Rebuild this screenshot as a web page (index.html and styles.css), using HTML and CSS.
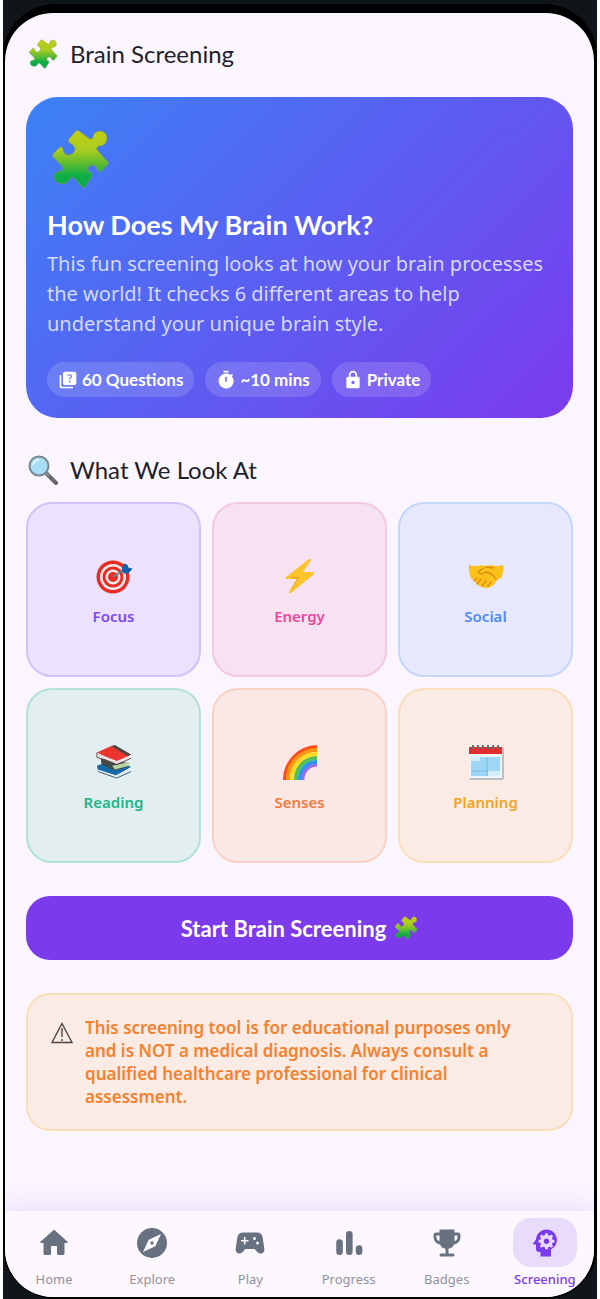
FILE: index.html
```html
<!DOCTYPE html>
<html lang="en">
<head>
<meta charset="utf-8">
<meta name="viewport" content="width=device-width, initial-scale=1">
<title>Brain Screening</title>
<link rel="stylesheet" href="styles.css">
</head>
<body>
<svg class="defs" width="0" height="0" aria-hidden="true">
  <defs>
    <linearGradient id="leaf" x1="0" y1="0" x2="0" y2="1">
      <stop offset="0" stop-color="#bfd016"/>
      <stop offset=".35" stop-color="#a9cb22"/>
      <stop offset=".55" stop-color="#67bd2e"/>
      <stop offset=".78" stop-color="#0eae45"/>
      <stop offset="1" stop-color="#0aa94a"/>
    </linearGradient>
    <symbol id="puzzle" viewBox="0 0 60 60">
      <path fill="url(#leaf)" stroke="#8c9a55" stroke-width=".6" d="M19 10 26 2Q27 1 29 2L37 8Q42 12 43 8Q44 2 50 2Q57 3 57 9Q57 16 50 17Q46 17 47 21L58 33Q59 34 58 35L51 43Q50 44 48 41Q46 36 42 36Q37 37 38 42Q43 44 42 47L35 58Q34 60 32 58L24 49Q22 47 20 50Q17 55 12 55Q5 54 4 48Q5 42 11 42Q15 41 12 37L3 28Q2 26 3 25L10 18Q12 17 13 20Q13 25 18 26Q24 26 25 20Q25 17 20 14Q17 12 19 10Z"/>
    </symbol>
  </defs>
</svg>
<div class="backdrop">
<div class="phone">
<div class="screen">
  <main class="content">
    <header class="heading">
      <svg class="heading-icon" aria-hidden="true"><use href="#puzzle"/></svg>
      <h1 class="heading-text">Brain Screening</h1>
    </header>

    <section class="hero">
      <svg class="hero-icon" aria-hidden="true"><use href="#puzzle"/></svg>
      <h2 class="hero-title">How Does My Brain Work?</h2>
      <p class="hero-text">This fun screening looks at how your brain processes the world! It checks 6 different areas to help understand your unique brain style.</p>
      <ul class="chips">
        <li class="chip"><svg class="chip-icon" viewBox="0 0 24 24" aria-hidden="true"><path d="M4 6H2v14c0 1.100.900 2 2 2h14v-2H4V6z"/><path fill-rule="evenodd" d="M20 2H8c-1.100 0-2 .900-2 2v12c0 1.100.900 2 2 2h12c1.100 0 2-.900 2-2V4c0-1.100-.900-2-2-2zm-5.990 13c-.590 0-1.050-.470-1.050-1.050 0-.590.470-1.040 1.050-1.040.590 0 1.040.450 1.040 1.040-.010.580-.450 1.050-1.040 1.050zm2.500-6.170c-.630.930-1.230 1.210-1.560 1.810-.130.240-.180.400-.180 1.180h-1.520c0-.410-.060-1.080.260-1.650.410-.730 1.180-1.160 1.630-1.800.480-.680.210-1.940-1.140-1.940-.880 0-1.320.670-1.500 1.230l-1.370-.570C11.510 5.960 12.520 5 13.990 5c1.230 0 2.080.560 2.510 1.260.370.600.580 1.730.010 2.570z"/></svg>60 Questions</li>
        <li class="chip"><svg class="chip-icon" viewBox="0 0 24 24" aria-hidden="true"><path fill-rule="evenodd" d="M9 1h6v2H9zM19 7.400l1.400-1.400-1.400-1.400-1.500 1.400A9 9 0 1 0 19 7.400zM11 8h2v6h-2z"/></svg>~10 mins</li>
        <li class="chip"><svg class="chip-icon" viewBox="0 0 24 24" aria-hidden="true"><path fill-rule="evenodd" d="M18 8h-1V6A5 5 0 0 0 7 6v2H6a2 2 0 0 0-2 2v10a2 2 0 0 0 2 2h12a2 2 0 0 0 2-2V10a2 2 0 0 0-2-2zM9 6a3 3 0 0 1 6 0v2H9zM12 13a2 2 0 1 1 0 4 2 2 0 0 1 0-4z"/></svg>Private</li>
      </ul>
    </section>

    <div class="heading section-heading">
      <svg class="heading-icon" viewBox="0 0 30 30" aria-hidden="true">
        <path d="M18 18 28 28" stroke="#66676b" stroke-width="4" stroke-linecap="round"/>
        <path d="m17 17 4 4" stroke="#93979b" stroke-width="2"/>
        <circle cx="11" cy="11" r="9.500" fill="#a9dff5" stroke="#7b8790" stroke-width="2"/>
        <path d="M5 10q1-5 6-5" stroke="#d9f4fd" stroke-width="2" fill="none"/>
      </svg>
      <h2 class="heading-text">What We Look At</h2>
    </div>

    <ul class="areas">
      <li class="area focus">
        <svg class="area-icon" viewBox="0 0 36 36" aria-hidden="true">
          <circle cx="17" cy="19" r="16.500" fill="#e92d25"/><circle cx="17" cy="19" r="13" fill="#f6e9ec"/><circle cx="17" cy="19" r="10.500" fill="#e92d25"/><circle cx="17" cy="19" r="7.500" fill="#f6e9ec"/><circle cx="17" cy="19" r="5" fill="#e92d25"/>
          <path d="M17 19 29 11" stroke="#6a7c89" stroke-width="2"/><path d="m26 12 2-6 3 1 1 3 4 1-4 4h-4z" fill="#0e62b0" stroke="#0e62b0"/>
        </svg>Focus</li>
      <li class="area energy">
        <svg class="area-icon" viewBox="0 0 36 36" aria-hidden="true"><path d="M27 1 4 19q-1 2 1 2l10 0L7 34q0 2 2 1l23-19q1-2-1-2H21l8-12q0-2-2-1z" fill="#fdc52a"/><path d="m7 34 11-15H6l9 2z" fill="#f2a62a"/></svg>Energy</li>
      <li class="area social">
        <svg class="area-icon" viewBox="0 0 36 36" aria-hidden="true"><path d="M1 7q7 2 12 0l5 1 5-1q6 2 12 0 1 8-2 13l-4 2q-4 8-11 8-7 0-12-7l-3-3Q0 14 1 7z" fill="#fdc11b"/><path d="m16 10-6 4q2 4 8 0 6 1 10 7M26 10l-8-1M9 20l-3 3m7-2-4 5m9-3-4 5m9-4-3 4" fill="none" stroke="#d78d12" stroke-width="1.300" stroke-linecap="round"/></svg>Social</li>
      <li class="area reading">
        <svg class="area-icon" viewBox="0 0 38 36" aria-hidden="true">
          <path d="m1 22 16-6 20 7-15 10L2 27z" fill="#1469a9"/><path d="m2 26 19 6 15-8v3L22 35 2 28z" fill="#e5eaed"/><path d="m2 28 20 7 15-7" fill="none" stroke="#345c79"/>
          <path d="m5 14 29 5v4l-14 4-14-6z" fill="#404a49"/><path d="m17 22 18-4v4l-15 4z" fill="#b8d5a3"/>
          <path d="M1 8 16 1l21 9-15 9z" fill="#ec342f"/><path d="m16 1 4-1 17 10-3 2z" fill="#4e4544"/><path d="m2 9 20 8 14-6v3l-14 6-20-8z" fill="#e9e2e5"/><path d="M1 8v5l21 8 15-7" fill="none" stroke="#663f43"/>
        </svg>Reading</li>
      <li class="area senses">
        <svg class="area-icon" viewBox="0 0 36 36" aria-hidden="true" fill="none" stroke-width="4"><path d="M3 36V35A33 33 0 0 1 35 3" stroke="#ff4b19"/><path d="M6 36V35A29 29 0 0 1 35 6" stroke="#ff9514"/><path d="M10 36V35A25 25 0 0 1 35 10" stroke="#ffdc20"/><path d="M14 36V35A21 21 0 0 1 35 14" stroke="#55be55"/><path d="M18 36V35A17 17 0 0 1 35 18" stroke="#2498e9"/><path d="M21 36V35A14 14 0 0 1 35 21" stroke="#9a68f5" stroke-width="3"/></svg>Senses</li>
      <li class="area planning">
        <svg class="area-icon" viewBox="0 0 36 36" aria-hidden="true"><rect x="1" y="3" width="35" height="33" rx="2" fill="#b9c3c7"/><path d="M1 5h33v29H1z" fill="#ebf4f7"/><path d="M1 3h33v7H1z" fill="#e32c2e"/><path d="M3 13h29v19H3z" fill="#9ed6f5"/><path d="M3 13h9v4H3zm17 14h12v5H20z" fill="#d3edf9"/><path d="M4 27h15M19 14v18" stroke="#71bae5"/><path d="M5 1v4m5-4v4m5-4v4m5-4v4m5-4v4m5-4v4" stroke="#58757c" stroke-width="2"/></svg>Planning</li>
    </ul>

    <button class="start" type="button">Start Brain Screening <svg class="start-icon" aria-hidden="true"><use href="#puzzle"/></svg></button>

    <aside class="notice">
      <svg class="notice-icon" viewBox="0 0 22 22" aria-hidden="true" fill="none" stroke="#4b4444"><path d="M11 1.500 21 20.500H1z" stroke-width="1.400"/><path d="M11 6v9m0 2v2" stroke-width="1.400"/></svg>
      <p class="notice-text">This screening tool is for educational purposes only and is NOT a medical diagnosis. Always consult a qualified healthcare professional for clinical assessment.</p>
    </aside>
  </main>

  <nav class="tabs" aria-label="Main">
    <a class="tab" href="#home"><span class="tab-pill"><svg class="tab-icon" viewBox="0 0 24 24"><path d="M10 19v-5h4v5c0 .550.450 1 1 1h3c.550 0 1-.450 1-1v-7h1.700c.460 0 .680-.570.330-.870L12.670 3.600c-.380-.340-.960-.340-1.340 0l-8.360 7.530c-.340.300-.130.870.330.870H5v7c0 .550.450 1 1 1h3c.550 0 1-.450 1-1z"/></svg></span>Home</a>
    <a class="tab" href="#explore"><span class="tab-pill"><svg class="tab-icon" viewBox="0 0 24 24"><path fill-rule="evenodd" d="M12 2a10 10 0 1 0 0 20 10 10 0 0 0 0-20zm2.200 12.200L6 18l3.800-8.200L18 6zM12 10.900a1.100 1.100 0 1 0 0 2.200 1.100 1.100 0 0 0 0-2.200z"/></svg></span>Explore</a>
    <a class="tab" href="#play"><span class="tab-pill"><svg class="tab-icon" viewBox="0 0 24 24"><path fill-rule="evenodd" d="m21.580 16.090-1.090-7.660A4 4 0 0 0 16.530 5H7.470a4 4 0 0 0-3.960 3.430l-1.090 7.660A2.550 2.550 0 0 0 4.940 19c.680 0 1.320-.270 1.800-.750L9 16h6l2.250 2.250c.480.480 1.130.750 1.800.750a2.550 2.550 0 0 0 2.530-2.910zM11 11H9v2H8v-2H6v-1h2V8h1v2h2zm4-1a1 1 0 1 1 0-2 1 1 0 0 1 0 2zm2 3a1 1 0 1 1 0-2 1 1 0 0 1 0 2z"/></svg></span>Play</a>
    <a class="tab" href="#progress"><span class="tab-pill"><svg class="tab-icon" viewBox="0 0 24 24"><rect x="3.500" y="9.500" width="4.400" height="10.500" rx="2.200"/><rect x="10" y="4" width="4.400" height="16" rx="2.200"/><rect x="16.500" y="13.500" width="4.400" height="6.500" rx="2.200"/></svg></span>Progress</a>
    <a class="tab" href="#badges"><span class="tab-pill"><svg class="tab-icon" viewBox="0 0 24 24"><path fill-rule="evenodd" d="M19 5h-2V3H7v2H5a2 2 0 0 0-2 2v1a5 5 0 0 0 4.390 4.940A5 5 0 0 0 11 15.900V19H8a1 1 0 0 0 0 2h8a1 1 0 0 0 0-2h-3v-3.100a5 5 0 0 0 3.610-2.960A5 5 0 0 0 21 8V7a2 2 0 0 0-2-2zM5 8V7h2v3.820A3 3 0 0 1 5 8zm14 0a3 3 0 0 1-2 2.820V7h2z"/></svg></span>Badges</a>
    <a class="tab active" href="#screening" aria-current="page"><span class="tab-pill"><svg class="tab-icon" viewBox="0 0 24 24"><path fill-rule="evenodd" d="M13 3C9.250 3 6.200 5.940 6.020 9.640L4.100 12.200a.5.500 0 0 0 .4.800H6v3a2 2 0 0 0 2 2h1v3h7v-4.680A7 7 0 0 0 13 3zM12.200 5.500h1.600l.3 1.300 1 .4 1.200-.8 1.100 1.100-.8 1.200.4 1 1.300.3v1.600l-1.300.3-.4 1 .8 1.200-1.100 1.100-1.200-.8-1 .4-.3 1.300h-1.600l-.3-1.300-1-.4-1.200.8-1.100-1.100.8-1.200-.4-1-1.300-.3V10l1.300-.3.4-1-.8-1.200 1.100-1.100 1.200.8 1-.4z"/><circle cx="13" cy="10.800" r="1.800"/></svg></span>Screening</a>
  </nav>
</div>
</div>
</div>
</body>
</html>
```
FILE: styles.css
```css
* { box-sizing: border-box; }
body {
  margin: 0;
  padding: 0 3px;
  min-height: 100vh;
  display: flex;
  background: #fff;
  font-family: "Noto Sans", "Open Sans", sans-serif;
}
h1, h2, p, ul { margin: 0; padding: 0; }
ul { list-style: none; }
svg { display: block; flex: none; }
.defs { position: absolute; }
.backdrop {
  flex: 1;
  display: flex;
  padding-top: 4px;
  background: #0f1518;
}
.phone {
  flex: 1;
  display: flex;
  padding: 9px 3px 2px 2px;
  border-radius: 52px;
  background: #000;
}
.screen {
  flex: 1;
  min-width: 0;
  display: flex;
  flex-direction: column;
  overflow: hidden;
  border-radius: 48px;
  background: #faf5ff;
}
.content { padding: 23px 21px 32px; }
.heading {
  display: flex;
  align-items: center;
  gap: 12px;
  height: 36px;
  padding-left: 2px;
}
.heading-icon { width: 30px; height: 30px; }
.heading-text {
  font-family: Lato, sans-serif;
  font-size: 24px;
  font-weight: 400;
  line-height: 32px;
  color: #1f1f2b;
}
.hero {
  margin-top: 25px;
  padding: 32px 21px 21px;
  border-radius: 32px;
  background: linear-gradient(135deg, #3b82f6, #7c3aed);
  color: #fff;
}
.hero-icon { width: 60px; height: 60px; margin-left: 3px; }
.hero-title {
  margin-top: 20px;
  font-family: Lato, sans-serif;
  font-size: 27px;
  font-weight: 700;
  line-height: 32px;
}
.hero-text {
  margin-top: 8px;
  font-size: 20px;
  line-height: 30px;
  color: #d5d9fd;
}
.chips { display: flex; flex-wrap: wrap; gap: 11px; margin-top: 23px; }
.chip {
  display: flex;
  align-items: center;
  gap: 4px;
  height: 35px;
  padding: 0 11px;
  border-radius: 18px;
  background: rgba(255, 255, 255, .15);
  font-family: Lato, sans-serif;
  font-size: 17px;
  font-weight: 700;
}
.chip-icon { width: 20px; height: 20px; fill: #fff; }
.section-heading { margin-top: 34px; }
.areas {
  display: grid;
  grid-template-columns: repeat(3, 1fr);
  gap: 11px;
  margin-top: 14px;
}
.area {
  aspect-ratio: 1;
  display: flex;
  flex-direction: column;
  align-items: center;
  justify-content: center;
  gap: 12px;
  padding-top: 4px;
  border: 2px solid;
  border-radius: 26px;
  font-size: 15px;
  font-weight: 600;
  line-height: 20px;
}
.area-icon { width: 36px; height: 36px; }
.focus { color: #7c4aed; background: #ede2fd; border-color: #d2c2fa; }
.energy { color: #e9489c; background: #f7e2f2; border-color: #f5c8e1; }
.social { color: #4d8bf5; background: #e7e8fe; border-color: #c5d6fb; }
.reading { color: #20b588; background: #e3eef1; border-color: #b2e1da; }
.senses { color: #f4793a; background: #fae8e6; border-color: #f9d2c3; }
.planning { color: #f2a31f; background: #faebe5; border-color: #f9dfba; }
.start {
  display: flex;
  align-items: center;
  justify-content: center;
  gap: 8px;
  width: 100%;
  height: 64px;
  margin-top: 33px;
  padding: 0;
  border: 0;
  border-radius: 24px;
  background: #7c3aed;
  color: #fff;
  font-family: Lato, sans-serif;
  font-size: 22px;
  font-weight: 700;
}
.start-icon { width: 24px; height: 24px; }
.notice {
  display: flex;
  gap: 12px;
  margin-top: 33px;
  padding: 21px 32px 21px 23px;
  border: 2px solid #f9dfba;
  border-radius: 24px;
  background: #faebe5;
}
.notice-icon { width: 22px; height: 22px; margin-top: 6px; }
.notice-text {
  font-size: 17px;
  font-weight: 600;
  line-height: 23px;
  color: #f4812f;
}
.tabs {
  display: grid;
  grid-template-columns: repeat(6, 1fr);
  margin-top: auto;
  padding: 7px 0 9px;
  background: #fdf7ff;
  box-shadow: 0 -4px 20px rgba(124, 58, 237, .12);
}
.tab {
  display: flex;
  flex-direction: column;
  align-items: center;
  gap: 3px;
  font-size: 13px;
  line-height: 18px;
  color: #9092a0;
  text-decoration: none;
}
.tab-pill {
  display: flex;
  align-items: center;
  justify-content: center;
  width: 64px;
  height: 49px;
  border-radius: 18px;
}
.tab-icon { width: 36px; height: 36px; fill: #68717f; }
.active { color: #7c3aed; font-weight: 500; }
.active .tab-pill { background: #e9dcfb; }
.active .tab-icon { fill: #7c3aed; }
```
